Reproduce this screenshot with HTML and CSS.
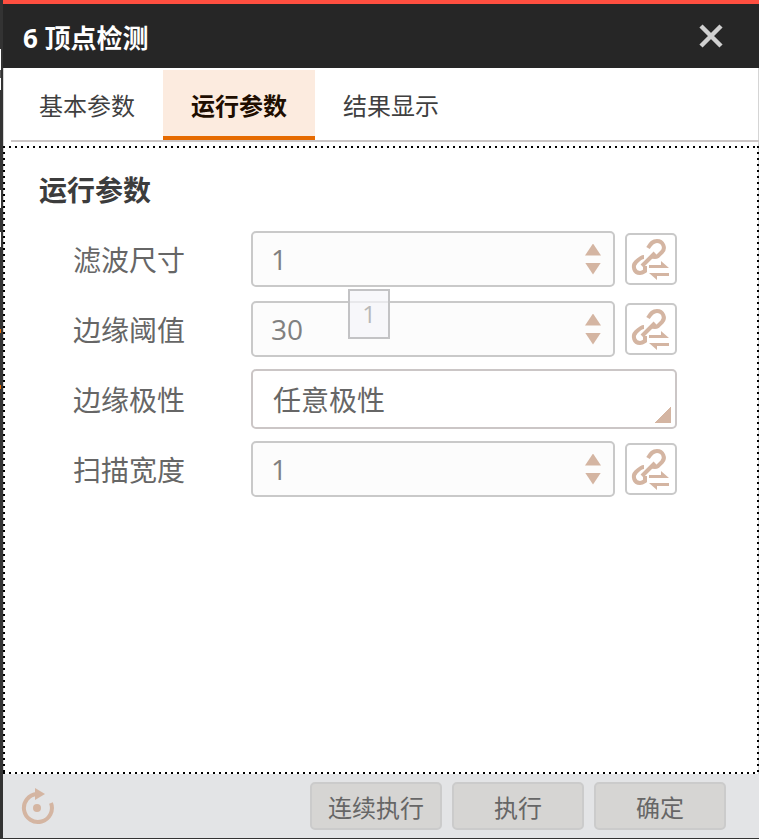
FILE: index.html
```html
<!DOCTYPE html>
<html lang="zh-CN">
  <head>
    <meta charset="UTF-8" />
    <meta name="viewport" content="width=device-width, initial-scale=1.0" />
    <title>顶点检测</title>
    <link rel="stylesheet" href="styles.css">
  </head>
  <body>
    <svg width="0" height="0" class="sprite">
      <symbol id="icon-link" viewBox="0 0 44 44">
        <g fill="none" stroke="currentColor" stroke-width="4">
          <path d="M19 11 C22 6 24 4 28 4 C34 4 37 11 33 15 L29 19 Q26 21 22 19" />
          <path d="M15 20 C12 20 10 22 7 25 C3 29 5 36 11 36 Q13 36 16 34 V29" />
          <path d="M13 29 L26 16" />
        </g>
        <path fill="currentColor" d="M20 28 H32 V24 L40 31 H20z M20 36 H40 V39 H28 V43z" />
      </symbol>
    </svg>

    <div class="window">
      <header class="titlebar">
        <h1>6 顶点检测</h1>
        <button class="close" aria-label="关闭">
          <svg width="26" height="26" viewBox="0 0 26 26">
            <path d="M3 3 L23 23 M23 3 L3 23" fill="none" stroke="#d0d0d0" stroke-width="4.5" />
          </svg>
        </button>
      </header>

      <nav class="tabs">
        <button class="tab">基本参数</button>
        <button class="tab active">运行参数</button>
        <button class="tab">结果显示</button>
      </nav>

      <main class="panel">
        <h2>运行参数</h2>
        <div class="form-item">
          <label for="filterSize">滤波尺寸</label>
          <div class="number">
            <input type="number" id="filterSize" value="1" />
            <div class="steps">
              <button class="up" aria-label="增加"></button>
              <button class="down" aria-label="减少"></button>
            </div>
          </div>
          <button class="link" aria-label="订阅"><svg><use href="#icon-link" /></svg></button>
        </div>
        <div class="form-item">
          <label for="threshold">边缘阈值</label>
          <div class="number">
            <input type="number" id="threshold" value="30" />
            <div class="steps">
              <button class="up" aria-label="增加"></button>
              <button class="down" aria-label="减少"></button>
            </div>
            <div class="tooltip">1</div>
          </div>
          <button class="link" aria-label="订阅"><svg><use href="#icon-link" /></svg></button>
        </div>
        <div class="form-item">
          <label for="polarity">边缘极性</label>
          <select id="polarity">
            <option>任意极性</option>
          </select>
        </div>
        <div class="form-item">
          <label for="scanWidth">扫描宽度</label>
          <div class="number">
            <input type="number" id="scanWidth" value="1" />
            <div class="steps">
              <button class="up" aria-label="增加"></button>
              <button class="down" aria-label="减少"></button>
            </div>
          </div>
          <button class="link" aria-label="订阅"><svg><use href="#icon-link" /></svg></button>
        </div>
      </main>

      <footer class="footer">
        <button class="reset" aria-label="重置">
          <svg width="36" height="40" viewBox="0 0 36 40">
            <path d="M18 8 A14 14 0 1 0 32 17" fill="none" stroke="currentColor" stroke-width="4" />
            <path d="M16 2 L26 8 L16 14z" fill="currentColor" />
            <circle cx="18" cy="22" r="4" fill="currentColor" />
          </svg>
        </button>
        <button class="btn">连续执行</button>
        <button class="btn">执行</button>
        <button class="btn">确定</button>
      </footer>
    </div>
  </body>
</html>
```

FILE: styles.css
```css
* {
  box-sizing: border-box;
}
body {
  margin: 0;
  padding: 0 0 1px 3px;
  /* 窗口左侧露出的底层界面 */
  background:
    linear-gradient(
      transparent 49px, #fff 49px 70px, #555 70px 78px, #fff 78px 90px,
      transparent 90px 190px, #fff 190px 208px, transparent 208px 232px,
      #fff 232px 247px, transparent 247px 329px, #e66a00 329px 333px,
      transparent 333px 385px, #e66a00 385px 389px, transparent 389px
    ) left top / 1px 400px no-repeat,
    #333;
  font-family: 'Open Sans', 'Noto Sans CJK SC', sans-serif;
}
button,
input,
select {
  margin: 0;
  padding: 0;
  border: 0;
  background: none;
  font-family: inherit;
}
.sprite {
  position: absolute;
}
.window {
  display: flex;
  flex-direction: column;
  min-height: calc(100vh - 1px);
  background: #fff;
  box-shadow: inset 1px 0 #d5d5d5, inset -1px 0 #d5d5d5;
}
.titlebar {
  display: flex;
  align-items: center;
  justify-content: space-between;
  height: 68px;
  padding: 0 35px 0 20px;
  border-top: 4px solid #ff4f40;
  background: #262626;
}
.titlebar h1 {
  margin: 0;
  padding-top: 4px;
  color: #fff;
  font-size: 26px;
  line-height: 36px;
}
.close {
  height: 26px;
}
.close svg {
  display: block;
}

.tabs {
  display: flex;
  margin-left: 8px;
  padding-top: 2px;
  border-bottom: 2px solid #cbc6c6;
}
.tab {
  height: 70px;
  padding: 2px 28px 0;
  border-bottom: 4px solid transparent;
  color: #404040;
  font-size: 24px;
}
.tab.active {
  border-color: #e66a00;
  background: #fcebdf;
  color: #200d00;
  font-weight: bold;
}

/* 四周点线，间距 6px */
.panel {
  --dot-x: repeating-linear-gradient(90deg, #000 0 2px, transparent 2px 6px);
  --dot-y: repeating-linear-gradient(#000 0 2px, transparent 2px 6px);
  flex: 1;
  margin-top: 4px;
  padding: 24px 82px 24px 36px;
  background:
    var(--dot-x) top / 100% 2px no-repeat,
    var(--dot-x) bottom / 100% 2px no-repeat,
    var(--dot-y) left / 2px 100% no-repeat,
    var(--dot-y) right / 2px 100% no-repeat;
}
.panel h2 {
  margin: 0 0 14px;
  color: #3c3c3c;
  font-size: 28px;
  line-height: 40px;
}
.form-item {
  display: flex;
  align-items: center;
  height: 70px;
  padding-left: 34px;
  color: #666;
  font-size: 28px;
}
.form-item label {
  flex: 0 0 178px;
}
.number {
  position: relative;
  display: flex;
  flex: 1;
  min-width: 0;
  height: 56px;
  border: 2px solid #c9c9c9;
  border-radius: 5px;
  background: #fcfcfc;
}
.number input {
  flex: 1;
  min-width: 0;
  padding-left: 18px;
  color: #808080;
  font-size: 28px;
  appearance: textfield;
}
.number input::-webkit-inner-spin-button {
  display: none;
}
.steps {
  display: flex;
  flex-direction: column;
  justify-content: center;
  gap: 7px;
  margin-right: 12px;
}
.steps button {
  width: 16px;
  height: 12px;
  background: #d4b5a2;
}
.steps .up {
  clip-path: polygon(50% 0, 100% 100%, 0 100%);
}
.steps .down {
  clip-path: polygon(0 0, 100% 0, 50% 100%);
}
.link {
  flex: none;
  width: 52px;
  height: 52px;
  margin-left: 10px;
  border: 2px solid #c9c9c9;
  border-radius: 5px;
  color: #d4b5a2;
}
.link svg {
  display: block;
  width: 44px;
  height: 44px;
  margin: auto;
}
select {
  flex: 1;
  min-width: 0;
  height: 60px;
  padding: 2px 0 0 20px;
  border: 2px solid #cbc6c6;
  border-radius: 5px;
  background: linear-gradient(135deg, transparent 50%, #d4b5a2 50%) right 4px bottom 4px / 16px 16px no-repeat;
  color: #666;
  font-size: 28px;
  appearance: none;
}
.tooltip {
  position: absolute;
  top: -14px;
  left: 95px;
  width: 42px;
  height: 50px;
  border: 2px solid #c3c3c5;
  background: rgba(245, 245, 250, 0.7);
  color: #b8b8b8;
  font-size: 24px;
  line-height: 46px;
  text-align: center;
}

.footer {
  display: flex;
  align-items: center;
  gap: 10px;
  height: 64px;
  padding: 0 33px 0 16px;
  background: #e3e4e6;
}
.reset {
  height: 40px;
  margin-right: auto;
  color: #d4b5a2;
}
.reset svg {
  display: block;
}
.btn {
  width: 132px;
  height: 48px;
  border: 2px solid #cbcbcb;
  border-radius: 5px;
  background: #d6d5d3;
  color: #666;
  font-size: 24px;
}
```
